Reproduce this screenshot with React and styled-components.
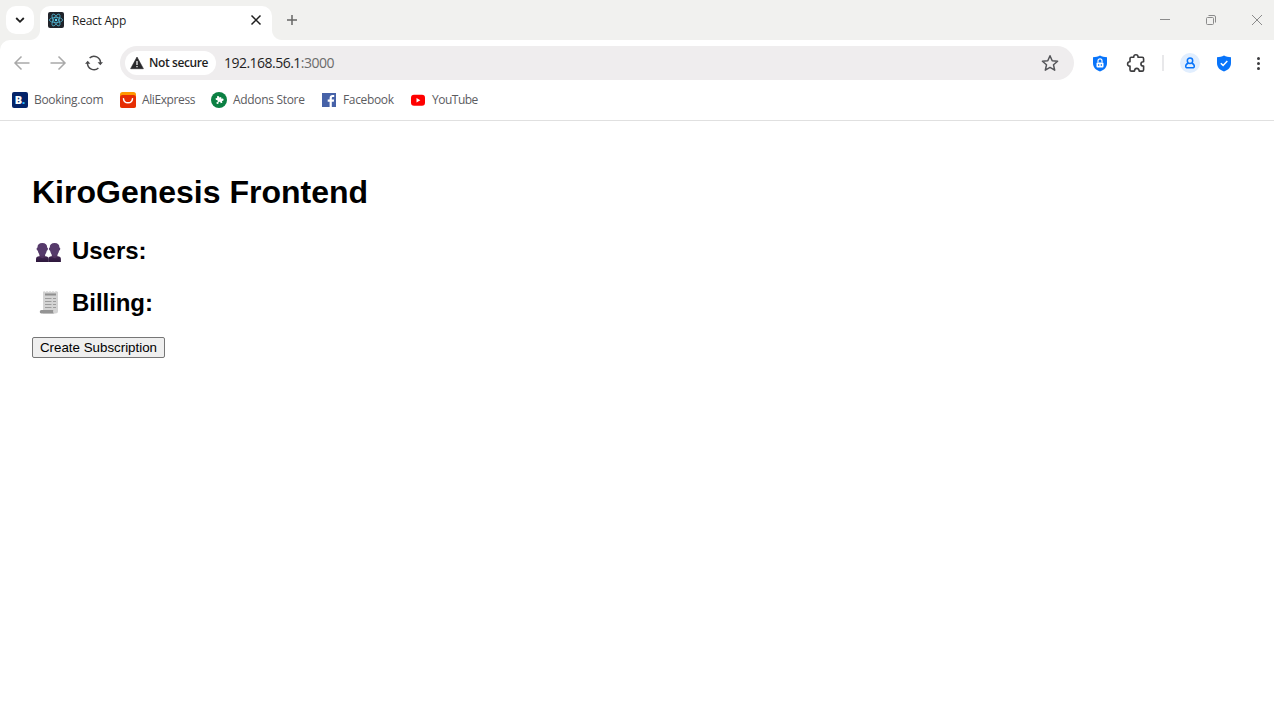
import React from 'react';
import styled, { createGlobalStyle } from 'styled-components';

const GlobalStyle = createGlobalStyle`
  * {
    box-sizing: border-box;
  }

  body {
    margin: 0;
    background: #fff;
    font-family: 'Open Sans', 'Noto Sans', sans-serif;
    font-size: 12px;
    overflow: hidden;
  }

  svg {
    display: block;
    flex: none;
  }
`;

const Window = styled.div`
  display: flex;
  flex-direction: column;
  height: 715px;
`;

const TabStrip = styled.header`
  display: flex;
  align-items: flex-end;
  height: 40px;
  padding-left: 6px;
  background: #f1f1ef;
`;

const TabSearch = styled.div`
  display: grid;
  place-items: center;
  width: 28px;
  height: 28px;
  margin: 0 6px 6px 0;
  border-radius: 10px;
  background: #fff;
`;

const Tab = styled.div`
  position: relative;
  display: flex;
  align-items: center;
  width: 232px;
  height: 34px;
  padding: 0 10px 6px 8px;
  border-radius: 10px 10px 0 0;
  background: #fff;
  color: #1f1f1f;

  &::before,
  &::after {
    content: '';
    position: absolute;
    bottom: 0;
    width: 10px;
    height: 10px;
  }

  &::before {
    left: -10px;
    background: radial-gradient(circle at 0 0, transparent 9.5px, #fff 10.5px);
  }

  &::after {
    right: -10px;
    background: radial-gradient(circle at 100% 0, transparent 9.5px, #fff 10.5px);
  }
`;

const Label = styled.span`
  white-space: nowrap;
  line-height: 16px;
  font-size: ${(p) => p.$size || 12}px;
  font-weight: ${(p) => p.$weight || 400};
  letter-spacing: ${(p) => p.$spacing || 0}px;
`;

const TabTitle = styled(Label)`
  flex: 1;
  margin-left: 8px;
  padding-top: 2px;
`;

const NewTab = styled.div`
  margin: 0 0 14px 14px;
`;

const WindowControls = styled.div`
  display: flex;
  align-items: center;
  height: 40px;
  gap: 34px;
  margin-left: auto;
  padding-right: 11px;
`;

const ToolbarArea = styled.div`
  background: #f1f1ef;
`;

const Toolbar = styled.div`
  display: flex;
  align-items: center;
  height: 46px;
  padding: 0 12px;
  border-radius: 10px 0 0 0;
  background: #fff;
`;

const Navigation = styled.div`
  display: flex;
  gap: 16px;
  width: 108px;
`;

const AddressBar = styled.div`
  display: flex;
  align-items: center;
  width: 954px;
  height: 34px;
  padding: 0 14px 0 5px;
  border-radius: 17px;
  background: #efedee;
`;

const SecurityChip = styled.div`
  display: flex;
  align-items: center;
  gap: 5px;
  width: 91px;
  height: 24px;
  padding-left: 5px;
  border-radius: 12px;
  background: #fff;
  color: #1f1f1f;
`;

const Address = styled(Label)`
  flex: 1;
  margin-left: 8px;
  color: #1f1f1f;

  span {
    color: #6b6b6b;
  }
`;

const Extensions = styled.div`
  display: flex;
  align-items: center;
  flex: 1;
  padding-left: 18px;
`;

const Divider = styled.div`
  width: 2px;
  height: 16px;
  margin: 0 16px;
  background: #e8e8ea;
`;

const Profile = styled.div`
  display: grid;
  place-items: center;
  width: 20px;
  height: 20px;
  margin-right: 16px;
  border-radius: 50%;
  background: #e1eefe;
`;

const MenuDots = styled.div`
  display: flex;
  flex-direction: column;
  gap: 2px;
  margin-left: auto;
  padding-right: 2px;

  i {
    width: 3px;
    height: 3px;
    border-radius: 50%;
    background: #3c3c3e;
  }
`;

const BookmarksBar = styled.nav`
  display: flex;
  align-items: center;
  height: 35px;
  padding: 0 0 7px 12px;
  border-bottom: 1px solid #e0e0e0;
  color: #5c5c5f;
`;

const Bookmark = styled.div`
  display: flex;
  align-items: center;
  gap: 6px;
  width: ${(p) => p.$width}px;
`;

const BookingIcon = styled.div`
  display: grid;
  place-items: center;
  width: 16px;
  height: 16px;
  border-radius: 2px;
  background: #04246a;
  color: #fff;
  font: 800 11px/16px 'Open Sans', sans-serif;

  span {
    color: #22b5ff;
  }
`;

const Page = styled.main`
  padding: 32px;
  color: #000;
  font-family: Arial, 'Liberation Sans', sans-serif;

  h1 {
    margin: 21px 0 22px;
    font-size: 32px;
    line-height: 37px;
  }
`;

const SectionTitle = styled.h2`
  display: flex;
  align-items: center;
  height: 32px;
  margin: 20px 0;
  padding-top: 2px;
  font-size: 24px;
  line-height: 27px;
  letter-spacing: -0.05px;

  svg {
    margin: -2px 7px 0 0;
  }
`;

const CreateButton = styled.button`
  display: block;
  width: 133px;
  height: 21px;
  padding: 1px 0;
  border: 1px solid #767676;
  border-radius: 2px;
  background: #efefef;
  color: #000;
  font: 13.333px Arial, 'Liberation Sans', sans-serif;
  line-height: 17px;
`;

const ReactIcon = () => (
  <svg width="16" height="16" viewBox="0 0 16 16" fill="none" stroke="#4fb3cf" strokeWidth=".8">
    <rect width="16" height="16" rx="2" fill="#20232a" stroke="none" />
    {[0, 60, 120].map((angle) => (
      <ellipse key={angle} cx="8" cy="8" rx="6.6" ry="2.6" transform={`rotate(${angle} 8 8)`} />
    ))}
    <circle cx="8" cy="8" r="1.2" fill="#61dafb" stroke="none" />
  </svg>
);

const ArrowIcon = ({ flip }) => (
  <svg width="20" height="20" viewBox="0 0 20 20" fill="none" stroke="#a9a9a9" strokeWidth="1.5">
    <path d={flip ? 'M2.5 10H17M10.5 3.5 17 10l-6.5 6.5' : 'M17.5 10H3M9.5 3.5 3 10l6.5 6.5'} />
  </svg>
);

const ReloadIcon = () => (
  <svg width="20" height="20" viewBox="0 0 20 20">
    <g fill="none" stroke="#4a4a4c" strokeWidth="1.5">
      <path d="M5.6 5A6.5 6.5 0 0 1 16.5 10" />
      <path d="M3.5 10a6.5 6.5 0 0 0 10.9 5" />
    </g>
    <path d="M13.6 9.2h5.4l-2.700 3zM1 10.800h5.400l-2.700-3z" fill="#4a4a4c" />
  </svg>
);

const WarningIcon = () => (
  <svg width="14" height="14" viewBox="0 0 14 14">
    <path d="M7 1 13.4 12.7H.6z" fill="#29292b" stroke="#29292b" strokeWidth=".6" strokeLinejoin="round" />
    <path d="M7 5v4M7 10v1.3" stroke="#fff" strokeWidth="1.2" />
  </svg>
);

const StarIcon = () => (
  <svg width="20" height="20" viewBox="0 0 20 20" fill="none" stroke="#55565a" strokeWidth="1.5" strokeLinejoin="round">
    <path d="m10 2.700 2.200 5 5.400.5-4.100 3.600 1.200 5.400-4.700-2.800-4.700 2.800 1.200-5.400-4.100-3.600 5.400-.5z" />
  </svg>
);

const PuzzleIcon = () => (
  <svg width="20" height="20" viewBox="0 0 20 20" fill="none" stroke="#3c3c3e" strokeWidth="1.6" strokeLinejoin="round">
    <path d="M4 5.600Q4 4.300 5.300 4.300H7.800C7.600 2.500 8.600 1.700 9.900 1.700s2.300.8 2.100 2.600h4.200q1.400 0 1.400 1.400v3c-1.700 0-2.700.9-2.700 2.200s1 2.200 2.700 2.200v3.600q0 1.400-1.400 1.400h-3.100c0-1.700-.9-2.700-2.300-2.700s-2.300 1-2.300 2.700H5.400Q4 18.100 4 16.700V13.100C2.200 13.200 1.600 12.200 1.600 10.900S2.400 8.700 4 8.700z" />
  </svg>
);

const SHIELD = 'M8 .5c2 1 4.300 1.500 7 1.700V8c0 4-2.400 7-7 8.500C3.400 15 1 12 1 8V2.200C3.700 2 6 1.500 8 .5z';

const LockShieldIcon = () => (
  <svg width="16" height="17" viewBox="0 0 16 17">
    <path d={SHIELD} fill="#0874fa" />
    <path d="M6 7.500V5.800a2 2 0 0 1 4 0v1.700" fill="none" stroke="#fff" strokeWidth="1.200" />
    <rect x="4.500" y="7.500" width="7" height="5" rx="1" fill="#fff" />
    <path d="M6 10h1.300M8.700 10H10" stroke="#0874fa" strokeWidth="1.300" />
  </svg>
);

const CheckShieldIcon = () => (
  <svg width="16" height="17" viewBox="0 0 16 17">
    <path d={SHIELD} fill="#0874fa" />
    <path d="m4.800 8.200 2.300 2.200 4.200-4.300" fill="none" stroke="#fff" strokeWidth="1.500" />
  </svg>
);

const ProfileIcon = () => (
  <svg width="12" height="14" viewBox="0 0 12 14" fill="none" stroke="#0874fa" strokeWidth="1.500">
    <circle cx="6" cy="4.800" r="2.700" />
    <path d="M4.200 7.300c-1.700.6-2.500 1.500-2.500 2.900 0 1.100.7 1.600 1.900 1.600h4.800c1.200 0 1.900-.5 1.900-1.600 0-1.400-.8-2.300-2.500-2.900" />
  </svg>
);

const UsersIcon = () => (
  <svg width="33" height="32" viewBox="0 0 33 32">
    <defs>
      <linearGradient id="bust" x1="0" y1="0" x2="0" y2="1">
        <stop offset="0" stopColor="#432653" />
        <stop offset="1" stopColor="#2c173b" />
      </linearGradient>
    </defs>
    {[0, 12.3].map((x) => (
      <g key={x} transform={`translate(${x} 0)`}>
        <path d="M4 29v-3c0-1.700 1.200-2.700 3.200-2.700h6.200c2 0 3.200 1 3.200 2.700v3z" fill="url(#bust)" />
        <path d="M7.500 20h5.600v4l-2.800 1.200L7.500 24z" fill="#50325f" />
        <path d="M10.300 10c3.200 0 4.900 1.600 4.800 4.500 1.300.2 1.200 2.800-.3 3.200-.5 3-2.300 5.300-4.500 5.300s-4-2.300-4.500-5.300c-1.500-.4-1.600-3-.3-3.200-.1-2.900 1.600-4.500 4.800-4.500z" fill="#563a6b" />
      </g>
    ))}
  </svg>
);

const BillIcon = () => (
  <svg width="33" height="32" viewBox="0 0 33 32">
    <path d="M11 7l1-1 1.500 1L15 6l1.500 1L18 6l1.500 1L21 6l1.500 1L24 6l2 1v19q0 2.500-2.500 2.500H11z" fill="#d4d4d4" />
    <path d="M13 9.500h11" stroke="#8f8f8f" strokeWidth="2" />
    <path d="M13 13.500h6.500M21 13.500h3M13 16.500h6.500M21 16.500h3M13 19.500h6.500M21 19.500h3M13 22.500h6.500M21 22.500h3" stroke="#9d9d9d" strokeWidth="1.200" />
    <path d="M9.500 25h11.800c-.6 1.500-.2 3.500 1.300 3.500H9.500c-2.200 0-2.200-3.500 0-3.500z" fill="#949494" />
  </svg>
);

const AliExpressIcon = () => (
  <svg width="16" height="16" viewBox="0 0 16 16">
    <rect width="16" height="16" rx="2.500" fill="#ff9800" />
    <path d="M0 5.500A2.500 2.500 0 0 1 2.500 3h11A2.500 2.500 0 0 1 16 5.500v8a2.500 2.500 0 0 1-2.500 2.500h-11A2.500 2.500 0 0 1 0 13.500z" fill="#e62e04" />
    <path d="M3.500 6.700c.5 5.500 8.500 5.500 9 0" fill="none" stroke="#fff" strokeWidth="1.500" strokeLinecap="round" />
  </svg>
);

const AddonsIcon = () => (
  <svg width="16" height="16" viewBox="0 0 16 16">
    <circle cx="8" cy="8" r="8" fill="#0b8043" />
    <path d="M5 5.600h1.800C6.300 4.900 6.700 3.800 7.700 3.800s1.500 1 1 1.800h2v1.900c.9-.5 1.900 0 1.900 1s-1 1.500-1.900 1v2H8.800c.4-.9-.1-1.600-1-1.600s-1.300.7-.9 1.600H5V9.700c.9.3 1.600-.2 1.600-1.100S5.900 7.200 5 7.500z" fill="#fff" transform="rotate(-12 8 8)" />
  </svg>
);

const FacebookIcon = () => (
  <svg width="16" height="16" viewBox="0 0 16 16">
    <path d="M1 1h14v14H1z" fill="#4662a8" />
    <path d="M8.600 15V9.800H6.700V7.600h1.900V6c0-2 1.200-3 3-3h1.600v2H12c-.9 0-1.200.4-1.200 1.200v1.400h2.300l-.3 2.200h-2V15z" fill="#fff" />
  </svg>
);

const YouTubeIcon = () => (
  <svg width="16" height="16" viewBox="0 0 16 16">
    <rect x="1" y="2.700" width="14" height="11" rx="3" fill="#f00" />
    <path d="m6.500 6 3.800 2.200-3.800 2.200z" fill="#fff" />
  </svg>
);

const bookmarks = [
  { label: 'Booking.com', width: 108, spacing: -0.3, icon: <BookingIcon><div>B<span>.</span></div></BookingIcon> },
  { label: 'AliExpress', width: 91, spacing: -0.4, icon: <AliExpressIcon /> },
  { label: 'Addons Store', width: 110, spacing: -0.32, icon: <AddonsIcon /> },
  { label: 'Facebook', width: 89, spacing: -0.35, icon: <FacebookIcon /> },
  { label: 'YouTube', width: 80, spacing: -0.5, icon: <YouTubeIcon /> },
];

const BrowserTabs = () => (
  <TabStrip>
    <TabSearch>
      <svg width="10" height="10" viewBox="0 0 10 10" fill="none" stroke="#1f1f1f" strokeWidth="1.800">
        <path d="m1.200 3 3.800 3.800L8.800 3" />
      </svg>
    </TabSearch>
    <Tab>
      <ReactIcon />
      <TabTitle $spacing={-0.25}>React App</TabTitle>
      <svg width="12" height="12" viewBox="0 0 12 12" stroke="#1f1f1f" strokeWidth="1.500">
        <path d="m1.500 1.500 9 9M10.500 1.500l-9 9" />
      </svg>
    </Tab>
    <NewTab>
      <svg width="12" height="12" viewBox="0 0 12 12" stroke="#666" strokeWidth="1.500">
        <path d="M1 6h10M6 1v10" />
      </svg>
    </NewTab>
    <WindowControls>
      <svg width="12" height="12" viewBox="0 0 12 12" stroke="#8b8b8b">
        <path d="M1 5.500h10" />
      </svg>
      <svg width="12" height="12" viewBox="0 0 12 12" fill="none" stroke="#8b8b8b">
        <rect x="1.500" y="3.500" width="7" height="7" rx="1" />
        <path d="M3.500 1.500H9a1.500 1.500 0 0 1 1.500 1.500v5.500" />
      </svg>
      <svg width="12" height="12" viewBox="0 0 12 12" stroke="#8b8b8b">
        <path d="m1 1 10 10M11 1 1 11" />
      </svg>
    </WindowControls>
  </TabStrip>
);

const BrowserToolbar = () => (
  <ToolbarArea>
    <Toolbar>
      <Navigation>
        <ArrowIcon />
        <ArrowIcon flip />
        <ReloadIcon />
      </Navigation>
      <AddressBar>
        <SecurityChip>
          <WarningIcon />
          <Label $weight={600} $spacing={-0.4}>Not secure</Label>
        </SecurityChip>
        <Address $size={14} $spacing={-0.52}>
          192.168.56.1<span>:3000</span>
        </Address>
        <StarIcon />
      </AddressBar>
      <Extensions>
        <LockShieldIcon />
        <Spacer />
        <PuzzleIcon />
        <Divider />
        <Profile>
          <ProfileIcon />
        </Profile>
        <CheckShieldIcon />
        <MenuDots>
          <i />
          <i />
          <i />
        </MenuDots>
      </Extensions>
    </Toolbar>
  </ToolbarArea>
);

const Spacer = styled.div`
  width: 18px;
`;

const App = () => (
  <Window>
    <GlobalStyle />
    <BrowserTabs />
    <BrowserToolbar />
    <BookmarksBar>
      {bookmarks.map((b) => (
        <Bookmark key={b.label} $width={b.width}>
          {b.icon}
          <Label $spacing={b.spacing}>{b.label}</Label>
        </Bookmark>
      ))}
    </BookmarksBar>
    <Page>
      <h1>KiroGenesis Frontend</h1>
      <SectionTitle>
        <UsersIcon />
        Users:
      </SectionTitle>
      <SectionTitle>
        <BillIcon />
        Billing:
      </SectionTitle>
      <CreateButton>Create Subscription</CreateButton>
    </Page>
  </Window>
);

export default App;
